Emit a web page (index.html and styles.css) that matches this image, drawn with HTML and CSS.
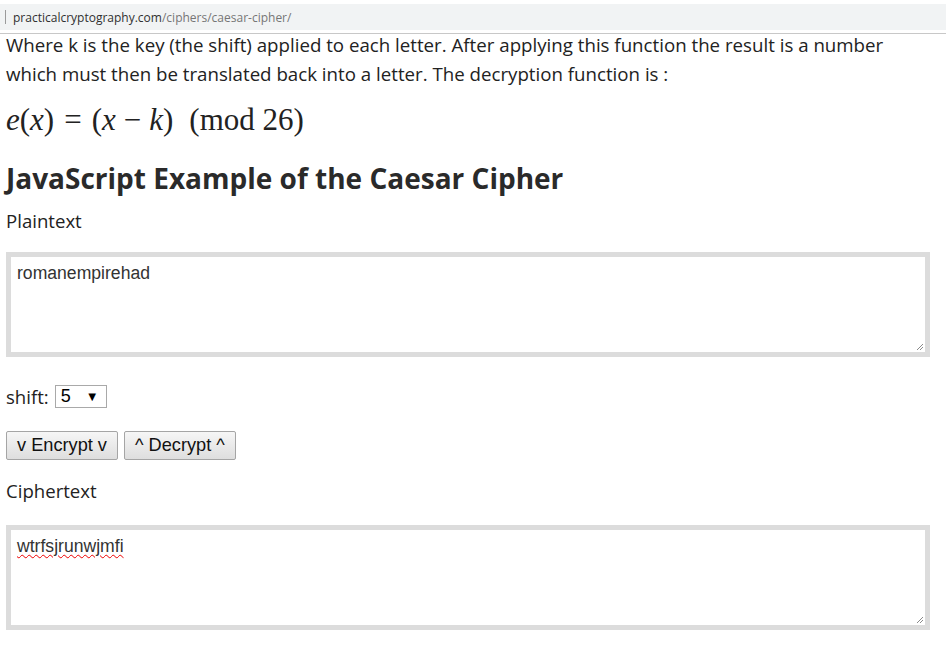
FILE: index.html
```html
<!DOCTYPE html>
<html>
<head>
<meta charset="utf-8">
<link rel="stylesheet" href="styles.css">
</head>
<body>
<div class="urlbar">
  <div class="urlfield"><span class="caret"></span><span class="domain">practicalcryptography.com</span><span class="path">/ciphers/caesar-cipher/</span></div>
</div>
<main class="content">
  <p class="para">Where k is the key (the shift) applied to each letter. After applying this function the result is a number which must then be translated back into a letter. The decryption function is :</p>
  <div class="formula"><i>e</i>(<i>x</i>)<span class="rel">=</span>(<i>x</i><span class="op">&minus;</span><i>k</i>)<span class="mod">(mod 26)</span></div>
  <h2 class="heading">JavaScript Example of the Caesar Cipher</h2>
  <div class="label">Plaintext</div>
  <div class="textbox"><span>romanempirehad</span><svg class="grip" width="8" height="8" viewBox="0 0 8 8"><path d="M7 1 L1 7 M7 4 L4 7" stroke="#8a8a8a" stroke-width="1"/></svg></div>
  <div class="shiftrow"><span>shift:</span><div class="select"><span>5</span><span class="arrow">&#9660;</span></div></div>
  <div class="buttons"><button class="btn">v Encrypt v</button><button class="btn">^ Decrypt ^</button></div>
  <div class="label label-cipher">Ciphertext</div>
  <div class="textbox textbox-cipher"><span class="misspelled">wtrfsjrunwjmfi</span><svg class="grip" width="8" height="8" viewBox="0 0 8 8"><path d="M7 1 L1 7 M7 4 L4 7" stroke="#8a8a8a" stroke-width="1"/></svg></div>
</main>
</body>
</html>
```
FILE: styles.css
```css
html, body { margin: 0; padding: 0; background: #fff; }
body { font-family: "Open Sans", "DejaVu Sans", sans-serif; color: #222; overflow: hidden; }

.urlbar { height: 29px; padding-top: 4px; border-bottom: 1px solid #c8c8c8; background: #fff; }
.urlfield { height: 26px; background: #f1f3f4; display: flex; align-items: center; font-size: 12px; font-family: "Open Sans", sans-serif; }
.caret { width: 1px; height: 14px; background: #9a9a9a; margin-left: 5px; margin-right: 7px; }
.domain { color: #303030; }
.path { color: #767676; }

.content { padding: 0 6px; }
.para { margin: -4px 0 0; max-width: 895px; font-size: 18.7px; line-height: 29px; color: #222; }
.formula { margin-top: 12px; height: 40px; line-height: 40px; font-family: "Liberation Serif", "DejaVu Serif", serif; font-size: 31px; color: #222; }
.rel { margin: 0 10px; }
.op { margin: 0 8px; }
.mod { margin-left: 16px; }
.heading { margin: 20px 0 0; font-size: 28px; line-height: 36px; font-weight: bold; color: #2a2a2a; }
.label { margin-top: 10px; font-size: 18.6px; line-height: 29px; }
.label-cipher { margin-top: 16px; }

.textbox { position: relative; margin-top: 17px; width: 924px; height: 105px; box-sizing: border-box; border: 5px solid #dcdcdc; background: #fff; padding: 5px 6px; font-family: "Liberation Sans", Arial, sans-serif; font-size: 17.6px; line-height: 22px; color: #333; }
.textbox-cipher { margin-top: 20px; }
.grip { position: absolute; right: 1px; bottom: 1px; }
.misspelled { text-decoration: underline wavy #e00; text-underline-offset: 2px; text-decoration-thickness: 1px; }

.shiftrow { margin-top: 25px; height: 29px; display: flex; align-items: center; gap: 6px; font-size: 18.6px; }
.select { width: 52px; height: 23px; box-sizing: border-box; border: 1px solid #a9a9a9; background: #fff; display: flex; align-items: center; justify-content: space-between; padding: 0 7px 0 5px; font-family: "Liberation Sans", Arial, sans-serif; font-size: 18px; color: #000; }
.arrow { font-size: 13px; }

.buttons { margin-top: 20px; display: flex; gap: 6px; }
.btn { height: 29px; padding: 0 10px; border: 1px solid #a5a5a5; border-radius: 2px; background: linear-gradient(#f6f6f6, #dedede); font-family: "Liberation Sans", Arial, sans-serif; font-size: 18.2px; color: #111; }
```
